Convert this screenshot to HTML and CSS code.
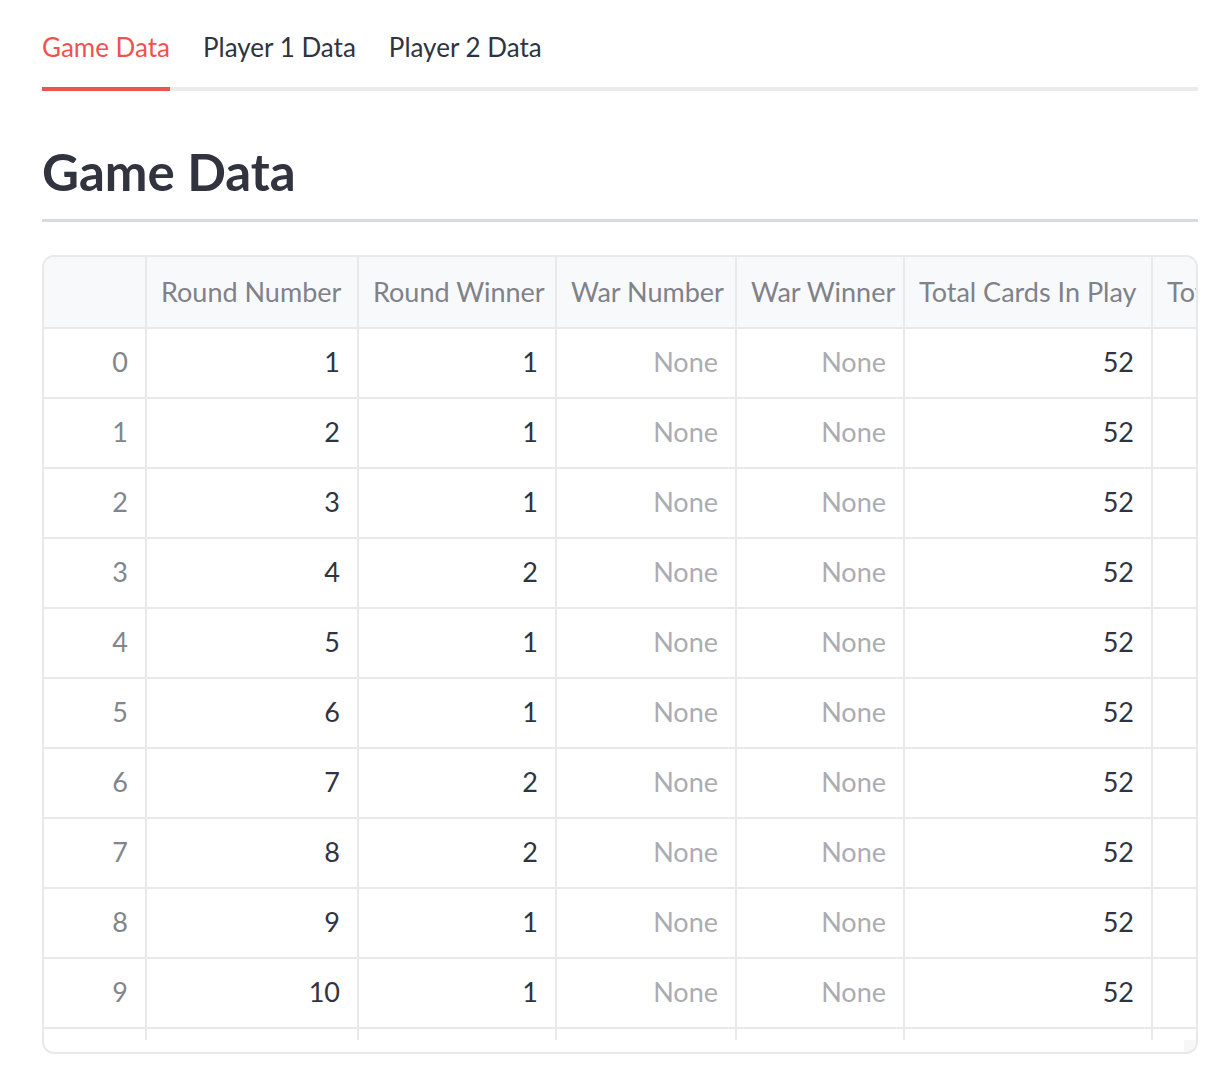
FILE: index.html
```html
<!DOCTYPE html>
<html>
<head>
<meta charset="utf-8">
<link rel="stylesheet" href="styles.css">
</head>
<body>
<div class="page">
  <div class="tabs">
    <div class="tab active">Game Data</div>
    <div class="tab">Player 1 Data</div>
    <div class="tab">Player 2 Data</div>
  </div>
  <h2 class="title">Game Data</h2>
  <div class="grid-wrap">
    <div class="grid">
      <div class="c h idx"></div>
      <div class="c h">Round Number</div>
      <div class="c h">Round Winner</div>
      <div class="c h">War Number</div>
      <div class="c h">War Winner</div>
      <div class="c h">Total Cards In Play</div>
      <div class="c h last">Total Cards</div>

      <div class="c idx">0</div><div class="c n">1</div><div class="c n">1</div><div class="c n none">None</div><div class="c n none">None</div><div class="c n">52</div><div class="c last"></div>
      <div class="c idx">1</div><div class="c n">2</div><div class="c n">1</div><div class="c n none">None</div><div class="c n none">None</div><div class="c n">52</div><div class="c last"></div>
      <div class="c idx">2</div><div class="c n">3</div><div class="c n">1</div><div class="c n none">None</div><div class="c n none">None</div><div class="c n">52</div><div class="c last"></div>
      <div class="c idx">3</div><div class="c n">4</div><div class="c n">2</div><div class="c n none">None</div><div class="c n none">None</div><div class="c n">52</div><div class="c last"></div>
      <div class="c idx">4</div><div class="c n">5</div><div class="c n">1</div><div class="c n none">None</div><div class="c n none">None</div><div class="c n">52</div><div class="c last"></div>
      <div class="c idx">5</div><div class="c n">6</div><div class="c n">1</div><div class="c n none">None</div><div class="c n none">None</div><div class="c n">52</div><div class="c last"></div>
      <div class="c idx">6</div><div class="c n">7</div><div class="c n">2</div><div class="c n none">None</div><div class="c n none">None</div><div class="c n">52</div><div class="c last"></div>
      <div class="c idx">7</div><div class="c n">8</div><div class="c n">2</div><div class="c n none">None</div><div class="c n none">None</div><div class="c n">52</div><div class="c last"></div>
      <div class="c idx">8</div><div class="c n">9</div><div class="c n">1</div><div class="c n none">None</div><div class="c n none">None</div><div class="c n">52</div><div class="c last"></div>
      <div class="c idx">9</div><div class="c n">10</div><div class="c n">1</div><div class="c n none">None</div><div class="c n none">None</div><div class="c n">52</div><div class="c last"></div>

      <div class="p"></div><div class="p"></div><div class="p"></div><div class="p"></div><div class="p"></div><div class="p"></div><div class="p plast"></div>
    </div>
    <div class="scrollbar"><div class="corner"></div></div>
  </div>
</div>
</body>
</html>
```

FILE: styles.css
```css
html, body {
  margin: 0;
  padding: 0;
  background: #ffffff;
}
body {
  font-family: "Lato", "Liberation Sans", sans-serif;
  color: #31333f;
}
.page {
  padding: 30px 30px 0 42px;
}
.tabs {
  display: flex;
  gap: 33px;
  border-bottom: 4px solid #ebebec;
}
.tab {
  font-size: 26px;
  line-height: 34px;
  padding-bottom: 23px;
  margin-bottom: -4px;
  border-bottom: 4px solid transparent;
  color: #31333f;
}
.tab.active {
  color: #ef5350;
  border-bottom-color: #ef5350;
}
.title {
  margin: 48px 0 0 0;
  font-size: 51px;
  line-height: 65px;
  font-weight: 700;
  color: #31333f;
  padding-bottom: 15px;
  border-bottom: 3px solid #d5dae4;
}
.grid-wrap {
  margin-top: 33px;
  border: 2px solid #e9e9ea;
  border-radius: 12px;
  overflow: hidden;
  height: 795px;
  box-sizing: content-box;
}
.grid {
  display: grid;
  grid-template-columns: 103px 212px 198px 180px 168px 248px 43px;
  grid-template-rows: 72px repeat(10, 70px) 11px;
  font-size: 27px;
}
.c {
  display: flex;
  align-items: center;
  justify-content: flex-end;
  padding: 0 17px 3px 14px;
  border-right: 2px solid #e9e9ea;
  border-bottom: 2px solid #e9e9ea;
  white-space: nowrap;
  overflow: hidden;
  color: #31333f;
}
.c.h {
  justify-content: flex-start;
  background: #f8f9fb;
  color: #808189;
  padding-bottom: 2px;
}
.c.idx {
  color: #84858c;
}
.c.none {
  color: #abacb1;
}
.c.last {
  border-right: none;
}
.c.h.last {
  padding-right: 0;
}
.p {
  border-right: 2px solid #e9e9ea;
}
.p.plast {
  border-right: none;
}
.scrollbar {
  display: flex;
  justify-content: flex-end;
  height: 12px;
}
.corner {
  width: 12px;
  height: 12px;
  background: #f7f7f8;
}
```
